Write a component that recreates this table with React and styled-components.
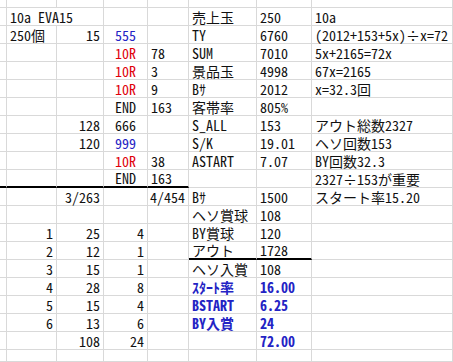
import React from 'react'
import styled, { createGlobalStyle } from 'styled-components'

const GlobalStyle = createGlobalStyle`
html, body {
    margin: 0;
    padding: 0;
    background: #fff;
}
`

const COLS = 8
const GRID = '#d9d9d9'
const BLUE = '#2323c4'
const RED = '#e0000a'

// [column, text, options]
const rows = [
    [],
    [[1, '10a EVA15', { span: 2 }], [5, '売上玉'], [6, '250'], [7, '10a']],
    [[1, '250個'], [2, '15', { align: 'right' }], [3, '555', { align: 'center', tone: 'blue' }], [5, 'TY'], [6, '6760'], [7, '(2012+153+5x)÷x=72']],
    [[3, '10R', { align: 'center', tone: 'red' }], [4, '78'], [5, 'SUM'], [6, '7010'], [7, '5x+2165=72x']],
    [[3, '10R', { align: 'center', tone: 'red' }], [4, '3'], [5, '景品玉'], [6, '4998'], [7, '67x=2165']],
    [[3, '10R', { align: 'center', tone: 'red' }], [4, '9'], [5, 'Bｻ'], [6, '2012'], [7, 'x=32.3回']],
    [[3, 'END', { align: 'center' }], [4, '163'], [5, '客帯率'], [6, '805%']],
    [[2, '128', { align: 'right' }], [3, '666', { align: 'center' }], [5, 'S_ALL'], [6, '153'], [7, 'アウト総数2327']],
    [[2, '120', { align: 'right' }], [3, '999', { align: 'center', tone: 'blue' }], [5, 'S/K'], [6, '19.01'], [7, 'ヘソ回数153']],
    [[3, '10R', { align: 'center', tone: 'red' }], [4, '38'], [5, 'ASTART'], [6, '7.07'], [7, 'BY回数32.3']],
    [[3, 'END', { align: 'center' }], [4, '163'], [7, '2327÷153が重要']],
    [[2, '3/263', { align: 'right' }], [4, '4/454', { align: 'right' }], [5, 'Bｻ'], [6, '1500'], [7, 'スタート率15.20']],
    [[5, 'ヘソ賞球'], [6, '108']],
    [[1, '1', { align: 'right' }], [2, '25', { align: 'right' }], [3, '4', { align: 'right' }], [5, 'BY賞球'], [6, '120']],
    [[1, '2', { align: 'right' }], [2, '12', { align: 'right' }], [3, '1', { align: 'right' }], [5, 'アウト'], [6, '1728']],
    [[1, '3', { align: 'right' }], [2, '15', { align: 'right' }], [3, '1', { align: 'right' }], [5, 'ヘソ入賞'], [6, '108']],
    [[1, '4', { align: 'right' }], [2, '28', { align: 'right' }], [3, '8', { align: 'right' }], [5, 'ｽﾀｰﾄ率', { tone: 'blue', bold: true }], [6, '16.00', { tone: 'blue', bold: true }]],
    [[1, '5', { align: 'right' }], [2, '15', { align: 'right' }], [3, '4', { align: 'right' }], [5, 'BSTART', { tone: 'blue', bold: true }], [6, '6.25', { tone: 'blue', bold: true }]],
    [[1, '6', { align: 'right' }], [2, '13', { align: 'right' }], [3, '6', { align: 'right' }], [5, 'BY入賞', { tone: 'blue', bold: true }], [6, '24', { tone: 'blue', bold: true }]],
    [[2, '108', { align: 'right' }], [3, '24', { align: 'right' }], [6, '72.00', { tone: 'blue', bold: true }]],
    [],
]

// thick bottom borders: row index -> columns
const thick = {
    10: [0, 1, 2, 3, 4],
    14: [5, 6],
}

const Sheet = () => {
    const cells = []
    rows.forEach((row, r) => {
        let c = 0
        while (c < COLS) {
            const hit = row.find(item => item[0] === c)
            const opts = hit ? hit[2] || {} : {}
            const span = opts.span || 1
            cells.push(
                <Cell
                    key={`${r}-${c}`}
                    $span={span}
                    $align={opts.align || 'left'}
                    $tone={opts.tone}
                    $bold={opts.bold}
                    $thick={(thick[r] || []).includes(c)}
                >
                    {hit ? hit[1] : ''}
                </Cell>
            )
            c += span
        }
    })
    return <Grid>{cells}</Grid>
}

const App = () => {
    return (
        <>
            <GlobalStyle />
            <Sheet />
        </>
    )
}

export default App

const Grid = styled.div`
display: grid;
grid-template-columns: 7px 50px 47px 44px 41px 68px 55px 1fr;
grid-template-rows: 8px repeat(19, 18px) 1fr;
width: 100vw;
height: 100vh;
overflow: hidden;
background: #fff;
font-family: "Noto Sans Mono CJK JP", "Noto Sans CJK JP", monospace;
font-size: 14px;
color: #111;
`

const Cell = styled.div`
grid-column: span ${p => p.$span};
box-sizing: border-box;
border-right: 1px solid ${GRID};
border-bottom: ${p => (p.$thick ? '2px solid #000' : `1px solid ${GRID}`)};
display: flex;
align-items: center;
justify-content: ${p => (p.$align === 'right' ? 'flex-end' : p.$align === 'center' ? 'center' : 'flex-start')};
padding: 0 3px;
white-space: nowrap;
overflow: visible;
line-height: 1;
color: ${p => (p.$tone === 'blue' ? BLUE : p.$tone === 'red' ? RED : 'inherit')};
font-weight: ${p => (p.$bold ? 700 : 400)};
`
